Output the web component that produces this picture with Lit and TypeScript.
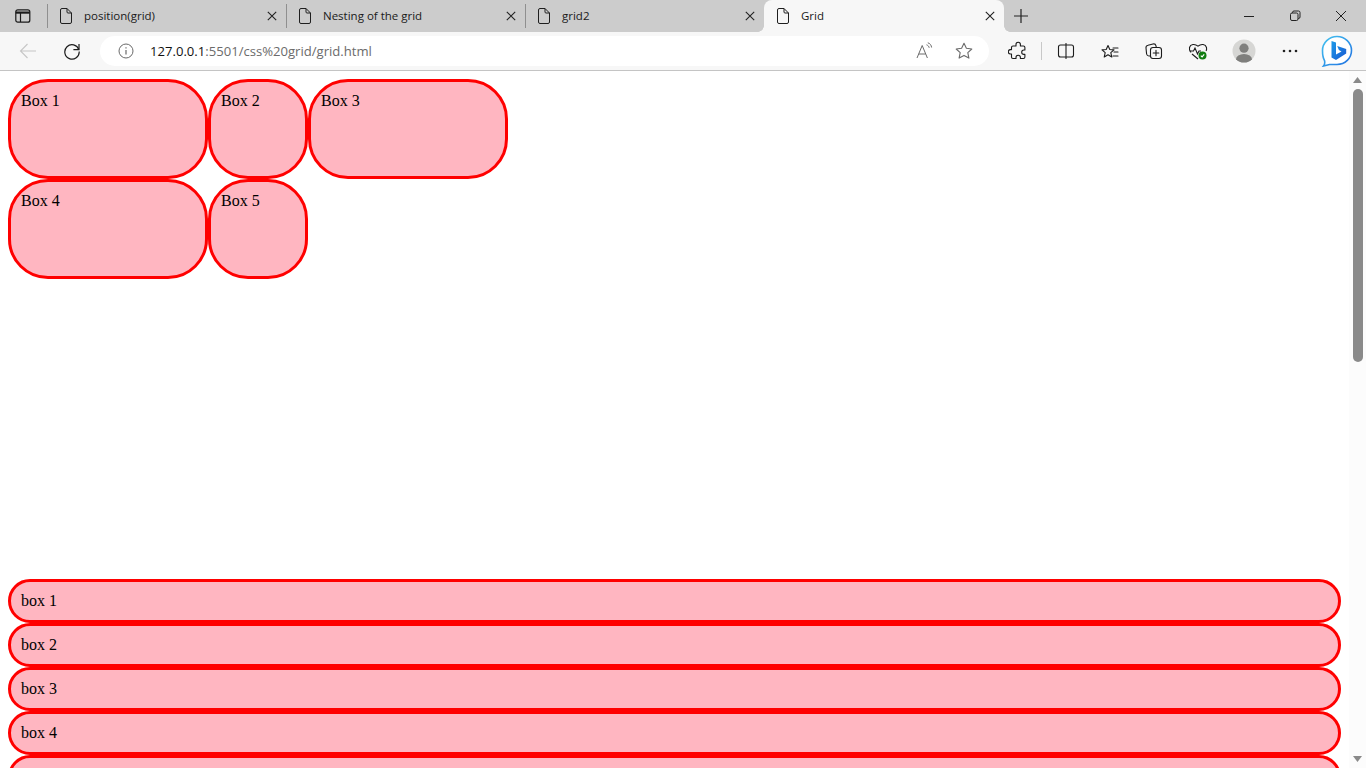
import { LitElement, html, css, svg } from "lit";
import { customElement } from "lit/decorators.js";

const pageIcon = html`<svg class="page" width="12" height="16" viewBox="0 0 12 16" fill="none" stroke="#1f1f1f" stroke-width="1"><path d="M2 .5h5l4.500 4.500v9a1.500 1.500 0 0 1-1.500 1.500H2A1.500 1.500 0 0 1 .5 14V2A1.500 1.500 0 0 1 2 .5z"/><path d="M7 .5V4a1 1 0 0 0 1 1h3.500"/></svg>`;
const closeIcon = html`<svg class="close" width="10" height="10" viewBox="0 0 10 10" stroke="#222" stroke-width="1.100"><path d="M.8.8l8.400 8.400M9.200.8L.8 9.200"/></svg>`;

const ic = (w: number, body: unknown) =>
  html`<svg width="${w}" height="${w}" viewBox="0 0 20 20" fill="none" stroke="#1c1c1c" stroke-width="1.100" stroke-linejoin="round" stroke-linecap="round">${body}</svg>`;

@customElement("app-root")
export class AppRoot extends LitElement {
  static styles = css`
    :host { display: block; width: 1366px; height: 768px; overflow: hidden; background: #fff; font-family: "Liberation Serif", serif; }
    .strip { display: flex; align-items: stretch; height: 32px; background: #cccccc; font-family: "Open Sans", sans-serif; font-size: 11.5px; color: #1a1a1a; }
    .lead { width: 47px; display: flex; align-items: center; justify-content: center; padding-right: 1px; box-sizing: border-box; }
    .divider { width: 1px; height: 24px; background: #8f8f8f; align-self: center; flex: none; }
    .tabwrap { display: flex; align-items: center; width: 238px; flex: none; position: relative; }
    .tabwrap .page { margin-left: 12px; flex: none; }
    .tabwrap .label { margin-left: 12px; margin-bottom: 2px; flex: 1; white-space: nowrap; }
    .tabwrap .close { margin-right: 9px; flex: none; }
    .active { background: #f7f7f7; border-radius: 8px 8px 0 0; height: 32px; width: 240px; }
    .active .page { margin-left: 13px; }
    .active::before, .active::after { content: ""; position: absolute; bottom: 0; width: 6px; height: 6px; background: radial-gradient(circle at var(--cx) 0, transparent 5.500px, #f7f7f7 6px); }
    .active::before { left: -6px; --cx: 0; }
    .active::after { right: -6px; --cx: 6px; }
    .plus { width: 34px; display: flex; align-items: center; justify-content: center; }
    .spacer { flex: 1; }
    .win { width: 46px; display: flex; align-items: center; justify-content: center; }
    .winend { width: 2px; }

    .bar { box-sizing: border-box; background: #f7f7f7; border-bottom: 1px solid #c4c4c4; height: 39px; display: flex; align-items: flex-start; padding-left: 6px; }
    .btn { width: 44px; height: 38px; display: flex; align-items: center; justify-content: center; flex: none; }
    .addr { width: 889px; height: 30px; margin: 4px 7px 0 6px; background: #fff; border-radius: 15px; display: flex; align-items: center; flex: none; font-family: "Open Sans", sans-serif; font-size: 13.1px; color: #6b6b6b; }
    .info { margin-left: 18px; width: 16px; height: 16px; display: flex; }
    .url { margin-left: 16px; white-space: nowrap; flex: 1; }
    .host { color: #111; }
    .addr-btn { width: 40px; height: 30px; display: flex; align-items: center; justify-content: center; }
    .addr-end { width: 5px; }
    .vsep { width: 1px; height: 18px; background: #c8c8c8; margin: 10px 2px 0 1px; flex: none; }
    .gap2 { width: 2px; flex: none; }
    .gap3 { width: 3px; flex: none; }

    .main { display: flex; height: 697px; overflow: hidden; }
    .view { flex: 1; min-width: 0; padding: 8px; overflow: hidden; box-sizing: border-box; }
    .grid1 { display: grid; grid-template-columns: 200px 100px 200px; grid-auto-rows: 100px; align-content: start; height: 500px; }
    .box { box-sizing: border-box; background: #ffb6c1; border: 3px solid #ff0000; border-radius: 40px; padding: 10px; font-size: 16px; color: #000; line-height: 18px; min-height: 44px; }
    .scroll { width: 17px; flex: none; background: #fcfcfc; display: flex; flex-direction: column; align-items: center; }
    .arrow { height: 18px; display: flex; align-items: center; justify-content: center; flex: none; }
    .thumb { width: 10px; height: 273px; background: #8a8a8a; border-radius: 5px; }
    .track { flex: 1; }
  `;

  render() {
    const tabs = ["position(grid)", "Nesting of the grid", "grid2"];
    return html`
      <div class="strip">
        <div class="lead">
          <svg width="16" height="14" viewBox="0 0 16 14" fill="none" stroke="#1a1a1a" stroke-width="1.200"><rect x=".8" y=".8" width="14" height="12.400" rx="2"/><path d="M.8 3.600h14" stroke-width="2.200"/><path d="M5.500 4v9"/></svg>
        </div>
        ${tabs.map(
          (t) => html`<div class="divider"></div><div class="tabwrap">${pageIcon}<span class="label">${t}</span>${closeIcon}</div>`
        )}
        <div class="tabwrap active">${pageIcon}<span class="label">Grid</span>${closeIcon}</div>
        <div class="plus"><svg width="16" height="16" viewBox="0 0 16 16" stroke="#222" stroke-width="1.200"><path d="M8 1v14M1 8h14"/></svg></div>
        <div class="spacer"></div>
        <div class="win"><svg width="12" height="12" viewBox="0 0 12 12" stroke="#222" stroke-width="1"><path d="M1 6.500h10"/></svg></div>
        <div class="win"><svg width="12" height="12" viewBox="0 0 12 12" fill="none" stroke="#222" stroke-width="1"><rect x="1.500" y="3" width="7.500" height="7.500" rx="1.500"/><path d="M3.500 3V2.500A1.500 1.500 0 0 1 5 1h4.500A1.500 1.500 0 0 1 11 2.500V7a1.500 1.500 0 0 1-1.500 1.500H9"/></svg></div>
        <div class="win"><svg width="12" height="12" viewBox="0 0 12 12" stroke="#222" stroke-width="1"><path d="M1 1l10 10M11 1L1 11"/></svg></div>
        <div class="winend"></div>
      </div>

      <div class="bar">
        <div class="btn"><svg width="18" height="18" viewBox="0 0 18 18" fill="none" stroke="#c6c6c6" stroke-width="1.100"><path d="M17 9H1.500M8.500 2L1.500 9l7 7"/></svg></div>
        <div class="btn"><svg width="18" height="18" viewBox="0 0 18 18" fill="none" stroke="#1c1c1c" stroke-width="1.200"><path d="M15.800 7.500A7.200 7.200 0 1 0 16.200 9.500"/><path d="M16 2v5.600h-5.600"/></svg></div>
        <div class="addr">
          <span class="info"><svg width="16" height="16" viewBox="0 0 16 16" fill="none" stroke="#6a6a6a" stroke-width="1"><circle cx="8" cy="8" r="7"/><path d="M8 7v4.500" stroke-width="1.200"/><path d="M8 4.300v1.200" stroke-width="1.200"/></svg></span>
          <span class="url"><span class="host">127.0.0.1</span>:5501/css%20grid/grid.html</span>
          <span class="addr-btn"><svg width="18" height="18" viewBox="0 0 18 18" fill="none" stroke="#6a6a6a" stroke-width="1"><path d="M2 16L7.200 3.500L12.400 16M3.800 12h6.800"/><path d="M11.500 2.800c1.500.5 2.400 1.500 2.700 3M12.800 .8c2.300.7 3.500 2.300 3.800 4.700"/></svg></span>
          <span class="addr-btn"><svg width="18" height="18" viewBox="0 0 18 18" fill="none" stroke="#6a6a6a" stroke-width="1.100" stroke-linejoin="round"><path d="M9 1.300l2.400 5 5.400.7-4 3.700 1.100 5.400L9 13.400l-4.900 2.700 1.100-5.400-4-3.700 5.400-.7z"/></svg></span>
          <span class="addr-end"></span>
        </div>
        <div class="btn">${ic(20, svg`<path d="M8 3.500a2.200 2.200 0 0 1 4.400 0V5h3A1.500 1.500 0 0 1 16.900 6.500V9h-1a2.200 2.200 0 0 0 0 4.400h1V16A1.500 1.500 0 0 1 15.400 17.500h-3v-1a2.200 2.200 0 0 0-4.400 0v1H5A1.500 1.500 0 0 1 3.500 16v-3h-1a2.200 2.200 0 0 1 0-4.400h1V6.500A1.500 1.500 0 0 1 5 5h3z"/>`)}</div>
        <div class="vsep"></div>
        <div class="btn">${ic(20, svg`<rect x="2.500" y="4" width="15" height="12" rx="2"/><path d="M10 2.500v15"/>`)}</div>
        <div class="btn">${ic(20, svg`<path d="M8 3l1.800 4 4.200.4-3.200 2.800 1 4.300L8 12.200l-3.800 2.300 1-4.300L2 7.400l4.200-.4z" transform="translate(0 1.500)"/><path d="M13 7h5M14 11h4M13 15h5"/>`)}</div>
        <div class="btn">${ic(20, svg`<path d="M6 15H5a2.500 2.500 0 0 1-2.400-2L2 7a2.500 2.500 0 0 1 2-2.800L9 3a2.500 2.500 0 0 1 3 1.800l.2 1"/><rect x="6.500" y="6.500" width="11" height="11" rx="2.500"/><path d="M12 9.200v5.600M9.200 12h5.600"/>`)}</div>
        <div class="btn"><svg width="20" height="20" viewBox="0 0 20 20" fill="none" stroke="#1c1c1c" stroke-width="1.100"><path d="M3 11.500C1.500 9.800 1 8.500 1.500 6.500 2.500 3 6.800 2.500 10 5.200 13.200 2.500 17.500 3 18.500 6.500c.3 1.300.2 2.300-.4 3.500"/><path d="M1.500 10h4l1.500-3 2.500 6 1.500-3h2"/><path d="M4 13l6 5"/><circle cx="14.500" cy="14.500" r="4" fill="#107c10" stroke="none"/><path d="M12.800 14.700l1.300 1.200 2.100-2.500" stroke="#fff"/></svg></div>
        <div class="gap2"></div>
        <div class="btn"><svg width="24" height="24" viewBox="0 0 24 24"><defs><clipPath id="pc"><circle cx="12" cy="12" r="11.500"/></clipPath></defs><circle cx="12" cy="12" r="11.500" fill="#d6d6d4"/><g clip-path="url(#pc)" fill="#7f7f7d"><circle cx="12" cy="9.200" r="4.600"/><ellipse cx="12" cy="20.500" rx="8" ry="5.500"/></g></svg></div>
        <div class="gap2"></div>
        <div class="btn"><svg width="16" height="4" viewBox="0 0 16 4" fill="#222"><circle cx="2" cy="2" r="1.300"/><circle cx="8" cy="2" r="1.300"/><circle cx="14" cy="2" r="1.300"/></svg></div>
        <div class="gap3"></div>
        <div class="btn"><svg width="32" height="32" viewBox="0 0 32 32"><defs><linearGradient id="bg" x1="0" y1="0" x2="1" y2="1"><stop offset="0" stop-color="#1c9ae8"/><stop offset="1" stop-color="#1a5ad2"/></linearGradient><linearGradient id="br" x1="0" y1="0" x2="1" y2="1"><stop offset="0" stop-color="#45c4f0"/><stop offset="1" stop-color="#1f6fe0"/></linearGradient></defs><path d="M16 1.500C24 1.500 30.500 7.700 30.500 15.500S24 29.500 16 29.500H8.500L2.500 31c1.200-1.500 1.500-3.500 1-5.500C2 23 1.500 19 1.500 15.500 1.500 7.700 8 1.500 16 1.500z" fill="#fff" stroke="url(#br)" stroke-width="1.600"/><path d="M10.500 6l4.500 1.600V19.500l5.500-3.100-2.600-1.300-1.700-4.200 9 3.100v4.500L15 25l-4.500-2.500z" fill="url(#bg)"/></svg></div>
      </div>

      <div class="main">
        <div class="view">
          <div class="grid1">
            ${["Box 1", "Box 2", "Box 3", "Box 4", "Box 5"].map((b) => html`<div class="box">${b}</div>`)}
          </div>
          ${["box 1", "box 2", "box 3", "box 4", ""].map((b) => html`<div class="box">${b}</div>`)}
        </div>
        <div class="scroll">
          <div class="arrow"><svg width="9" height="6" viewBox="0 0 9 6" fill="#8a8a8a"><path d="M4.500 0L9 6H0z"/></svg></div>
          <div class="thumb"></div>
          <div class="track"></div>
          <div class="arrow"><svg width="9" height="6" viewBox="0 0 9 6" fill="#8a8a8a"><path d="M0 0h9L4.500 6z"/></svg></div>
        </div>
      </div>
    `;
  }
}
